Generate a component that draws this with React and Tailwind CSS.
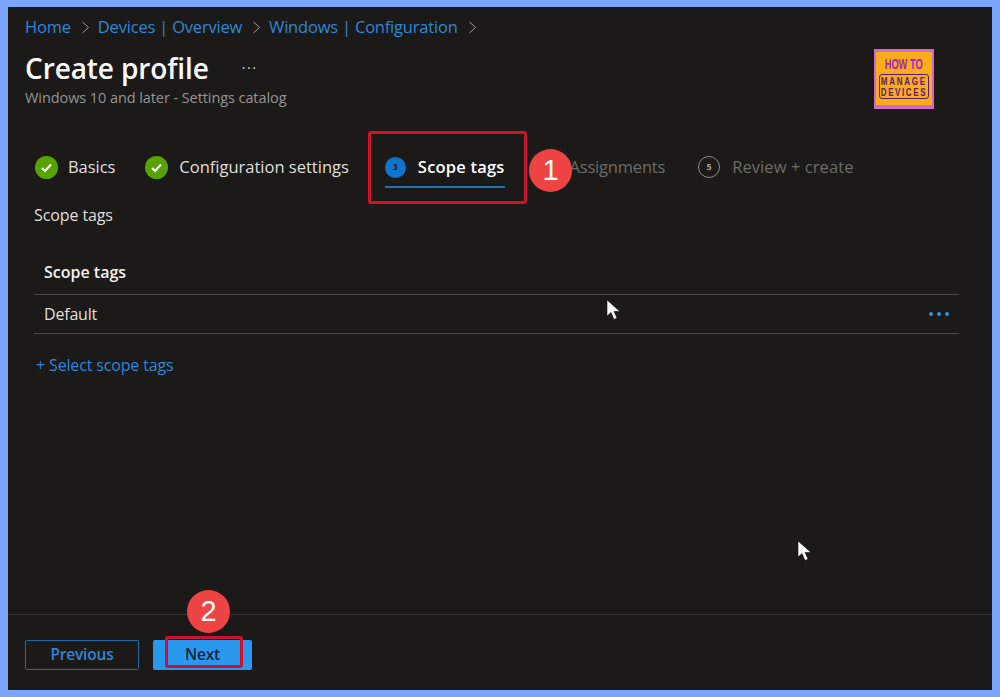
const Cursor = ({ className }) => (
  <svg className={className} width="16" height="24" viewBox="0 0 16 24">
    <path d="M1 1 L1 17 L5 13.5 L8 20.5 L11 19 L8 12.5 L14 12.5 Z" fill="#fff" stroke="#111" strokeWidth="0.6" />
  </svg>
);

const Check = () => (
  <span className="w-[23px] h-[23px] rounded-full bg-[#57a300] flex items-center justify-center shrink-0">
    <svg width="13" height="13" viewBox="0 0 13 13" fill="none">
      <path d="M2 7 L5 10 L11 3.5" stroke="#fff" strokeWidth="2.2" />
    </svg>
  </span>
);

const Chevron = () => (
  <svg width="9" height="13" viewBox="0 0 9 13" fill="none" className="shrink-0">
    <path d="M2.5 1 L8.5 6.5 L2.5 12" stroke="#a19f9d" strokeWidth="1" />
  </svg>
);

const Crumb = ({ children }) => <span className="text-[#2f86d8]">{children}</span>;

export default function App() {
  return (
    <div className="w-[1000px] h-[697px] bg-[#7aa6fc] pl-[8px] pr-[8px] pt-[7px] pb-[7px] overflow-hidden font-['Open_Sans','Noto_Sans',sans-serif]">
      <div className="relative w-full h-full bg-[#1b1a19] flex flex-col">
        <div className="flex-1 flex flex-col px-[17px] min-h-0">
          <nav className="flex items-center h-[24px] mt-[8px] text-[16.5px] gap-[9px] tracking-[-0.2px]">
            <Crumb>Home</Crumb>
            <Chevron />
            <Crumb>Devices | Overview</Crumb>
            <Chevron />
            <Crumb>Windows | Configuration</Crumb>
            <Chevron />
          </nav>
          <div className="flex items-start justify-between">
            <div>
              <div className="flex items-center mt-[10px] h-[38px]">
                <h1 className="text-[28px] font-semibold text-white tracking-[-0.1px] leading-[38px]">Create profile</h1>
                <span className="ml-[33px] text-[#d6d4d2] text-[14px] leading-none tracking-[1.5px]">···</span>
              </div>
              <p className="text-[14.5px] text-[#969492] leading-[18px] mt-[2px] tracking-[-0.08px]">Windows 10 and later - Settings catalog</p>
            </div>
            <div className="mt-[10px] mr-[41px] w-[60px] h-[60px] bg-[#d268c8] pt-[3px] px-[2px] pb-[4px] shrink-0">
              <div className="w-full h-full bg-[#fbac1a] flex flex-col items-center font-['Liberation_Sans',sans-serif] font-bold leading-none">
                <span className="text-[15px] text-[#a41fc4] mt-[4px] leading-[15px] whitespace-nowrap scale-x-[0.62]">HOW TO</span>
                <div className="mt-[3px] w-[50px] h-[25px] border border-[#5d1b70] rounded-[3px] text-[#5d1b70] text-[10px] leading-[11px] flex flex-col items-center justify-center">
                  <span className="tracking-[2.2px] whitespace-nowrap scale-x-[0.8]">MANAGE</span>
                  <span className="tracking-[2px] whitespace-nowrap scale-x-[0.8]">DEVICES</span>
                </div>
              </div>
            </div>
          </div>

          <div className="flex items-center h-[40px] mt-[38px] ml-[10px] text-[16.5px] tracking-[-0.05px]">
            <div className="flex items-center gap-[10px] text-[#e1dfdd]">
              <Check />
              <span>Basics</span>
            </div>
            <div className="flex items-center gap-[11px] text-[#e1dfdd] ml-[30px]">
              <Check />
              <span className="tracking-[0px]">Configuration settings</span>
            </div>
            <div className="relative flex items-center gap-[12px] ml-[36px] text-white font-semibold h-full">
              <span className="w-[21px] h-[21px] rounded-full bg-[#0f74cc] flex items-center justify-center text-[8px] text-[#1b1a19] font-bold">3</span>
              <span className="tracking-[0.2px]">Scope tags</span>
              <span className="absolute left-0 right-0 bottom-[-1px] h-[2px] bg-[#1b74b8]"></span>
            </div>
            <div className="flex items-center gap-[12px] text-[#6d6b6a] ml-[31px]">
              <span className="w-[22px] h-[22px] rounded-full border border-[#8a8886] shrink-0"></span>
              <span className="tracking-[-0.2px]">Assignments</span>
            </div>
            <div className="flex items-center gap-[12px] text-[#6d6b6a] ml-[33px]">
              <span className="w-[22px] h-[22px] rounded-full border border-[#8a8886] flex items-center justify-center text-[9px] font-bold text-[#a19f9d]">5</span>
              <span className="tracking-[0.08px]">Review + create</span>
            </div>
          </div>

          <p className="ml-[9px] mt-[18px] text-[16px] leading-[20px] text-[#e1dfdd] tracking-[-0.1px]">Scope tags</p>

          <div className="ml-[9px] mr-[16px] mt-[26px]">
            <div className="h-[44px] pl-[10px] pb-[2px] flex items-center border-b border-[#4a4847] text-[16px] font-semibold text-[#f3f2f1]">Scope tags</div>
            <div className="h-[39px] pl-[10px] pr-[9px] flex items-center justify-between border-b border-[#4a4847] text-[16px] text-[#e1dfdd] tracking-[-0.2px]">
              <span>Default</span>
              <span className="flex gap-[4px] mr-[1px]">
                <i className="w-[4px] h-[4px] rounded-full bg-[#2f8fe0]"></i>
                <i className="w-[4px] h-[4px] rounded-full bg-[#2f8fe0]"></i>
                <i className="w-[4px] h-[4px] rounded-full bg-[#2f8fe0]"></i>
              </span>
            </div>
          </div>

          <p className="ml-[11px] mt-[21px] text-[16px] leading-[20px] text-[#2f86d8] tracking-[-0.15px]">+ Select scope tags</p>
        </div>

        <footer className="h-[76px] border-t border-[#343331] px-[17px] pt-[25px] flex items-start gap-[14px] shrink-0">
          <button className="w-[114px] h-[30px] border border-[#1f6ba8] rounded-[2px] text-[15.5px] font-semibold text-[#2f86d8] tracking-[-0.2px]">Previous</button>
          <button className="w-[99px] h-[30px] bg-[#2b98f0] rounded-[2px] text-[15.5px] font-semibold text-[#10263c] tracking-[-0.2px]">Next</button>
        </footer>

        <div className="absolute left-[360px] top-[124px] w-[159px] h-[73px] border-[3px] border-[#d0112b] rounded-[3px]"></div>
        <div className="absolute left-[521px] top-[142px] w-[43px] h-[43px] rounded-full bg-[#ef4444] text-white text-[29px] flex items-center justify-center font-['Liberation_Sans',sans-serif]">1</div>
        <div className="absolute left-[179px] top-[583px] w-[43px] h-[43px] rounded-full bg-[#ef4444] text-white text-[29px] flex items-center justify-center font-['Liberation_Sans',sans-serif]">2</div>
        <div className="absolute left-[157px] top-[629px] w-[78px] h-[32px] border-[3px] border-[#c9132f] rounded-[3px]"></div>
        <Cursor className="absolute left-[598px] top-[292px]" />
        <Cursor className="absolute left-[789px] top-[533px]" />
      </div>
    </div>
  );
}
